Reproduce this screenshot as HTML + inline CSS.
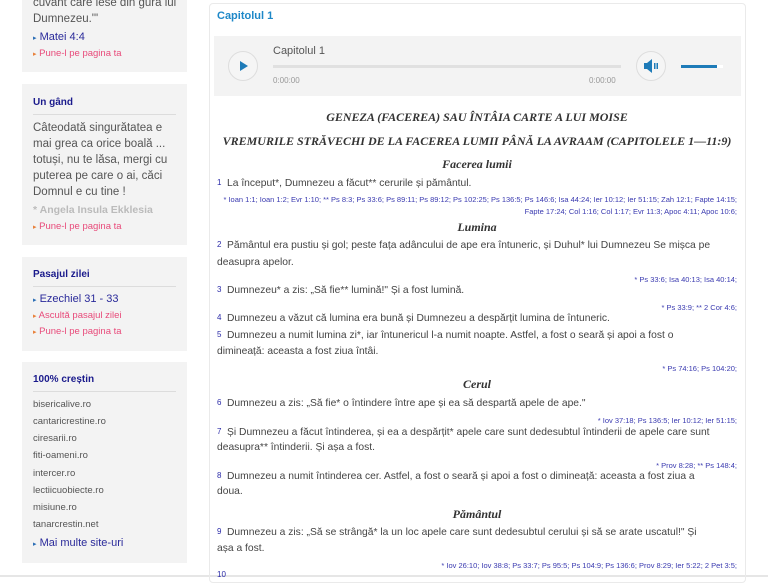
<!DOCTYPE html>
<html><head><meta charset="utf-8"><style>
*{margin:0;padding:0;box-sizing:border-box}
body{width:768px;height:577px;overflow:hidden;background:#fff;font-family:"Liberation Sans",sans-serif;position:relative}
.p{position:absolute;left:22px;width:165px;background:#f3f3f3}
.a{position:absolute;white-space:nowrap}
.h{font-size:10px;font-weight:bold;color:#1a1a8c}
.hr{position:absolute;left:11px;width:143px;height:1px;background:#dcdcdc}
.t{font-size:11.5px;color:#555;line-height:16px}
.lk{font-size:11px;color:#2a2a9a}
.pk{font-size:9.5px;color:#e84a7a}
.s{font-size:9.5px;color:#555}
.b{color:#2a6db5;font-size:7px}
.bo{color:#e8803a;font-size:7px}
.v{position:absolute;left:227px;font-size:10.3px;color:#444;white-space:nowrap}
.n{position:absolute;left:217px;font-size:8px;color:#2a2aa8;white-space:nowrap}
.r{position:absolute;right:31px;font-size:7.5px;color:#3a3ab0;white-space:nowrap}
.st{position:absolute;left:209px;width:536px;text-align:center;font-family:"Liberation Serif",serif;font-style:italic;font-weight:bold;color:#333;font-size:12px;white-space:nowrap}
</style></head><body>
<div class="p" style="top:-10px;height:82px">
 <div class="a t" style="left:11px;top:5px">cuvânt care iese din gura lui<br>Dumnezeu.'"</div>
 <div class="a lk" style="left:11px;top:41px"><span class="b">▸</span> Matei 4:4</div>
 <div class="a pk" style="left:11px;top:58px"><span class="bo">▸</span> Pune-l pe pagina ta</div>
</div>
<div class="p" style="top:84px;height:161px">
 <div class="a h" style="left:11px;top:13px">Un gând</div>
 <div class="hr" style="top:30px"></div>
 <div class="a t" style="left:11px;top:36px">Câteodată singurătatea e<br>mai grea ca orice boală ...<br>totuși, nu te lăsa, mergi cu<br>puterea pe care o ai, căci<br>Domnul e cu tine !</div>
 <div class="a" style="left:11px;top:120px;font-size:10.5px;font-weight:bold;color:#bbb">* Angela Insula Ekklesia</div>
 <div class="a pk" style="left:11px;top:137px"><span class="bo">▸</span> Pune-l pe pagina ta</div>
</div>
<div class="p" style="top:257px;height:94px">
 <div class="a h" style="left:11px;top:12px">Pasajul zilei</div>
 <div class="hr" style="top:29px"></div>
 <div class="a lk" style="left:11px;top:36px"><span class="b">▸</span> Ezechiel 31 - 33</div>
 <div class="a pk" style="left:11px;top:53px"><span class="bo">▸</span> Ascultă pasajul zilei</div>
 <div class="a pk" style="left:11px;top:69px"><span class="bo">▸</span> Pune-l pe pagina ta</div>
</div>
<div class="p" style="top:362px;height:201px">
 <div class="a h" style="left:11px;top:12px">100% creștin</div>
 <div class="hr" style="top:29px"></div>
 <div class="a s" style="left:11px;top:37px">bisericalive.ro</div>
 <div class="a s" style="left:11px;top:54px">cantaricrestine.ro</div>
 <div class="a s" style="left:11px;top:71px">ciresarii.ro</div>
 <div class="a s" style="left:11px;top:88px">fiti-oameni.ro</div>
 <div class="a s" style="left:11px;top:106px">intercer.ro</div>
 <div class="a s" style="left:11px;top:123px">lectiicuobiecte.ro</div>
 <div class="a s" style="left:11px;top:140px">misiune.ro</div>
 <div class="a s" style="left:11px;top:157px">tanarcrestin.net</div>
 <div class="a lk" style="left:11px;top:175px"><span class="b">▸</span> Mai multe site-uri</div>
</div>
<div style="position:absolute;left:0;top:575px;width:768px;height:2px;background:#e6e6e6"></div>

<div style="position:absolute;left:209px;top:3px;width:537px;height:580px;border:1px solid #eaeaea;border-radius:4px"></div>
<div class="a" style="left:217px;top:10px;font-size:11px;font-weight:bold;color:#1e88c8">Capitolul 1</div>
<div style="position:absolute;left:214px;top:36px;width:527px;height:60px;background:#f3f3f3"></div>
<div style="position:absolute;left:228px;top:51px;width:30px;height:30px;border-radius:50%;border:1px solid #ddd;background:#f5f5f5"></div>
<svg style="position:absolute;left:238px;top:60px" width="12" height="12"><path d="M2 1 L10 6 L2 11Z" fill="#1e7bb8"/></svg>
<div class="a" style="left:273px;top:45px;font-size:11px;color:#555">Capitolul 1</div>
<div style="position:absolute;left:273px;top:65px;width:348px;height:3px;background:#e0e0e0"></div>
<div class="a" style="left:273px;top:76px;font-size:8px;color:#999">0:00:00</div>
<div class="a" style="left:589px;top:76px;font-size:8px;color:#999">0:00:00</div>
<div style="position:absolute;left:636px;top:51px;width:30px;height:30px;border-radius:50%;border:1px solid #ddd;background:#f5f5f5"></div>
<svg style="position:absolute;left:643px;top:59px" width="16" height="14"><path d="M1 4 H4 L9 0 V14 L4 10 H1Z" fill="#1e7bb8"/><rect x="11" y="4" width="1.5" height="6" fill="#1e7bb8"/><rect x="13.5" y="4" width="1.5" height="6" fill="#1e7bb8"/></svg>
<div style="position:absolute;left:681px;top:65px;width:36px;height:3px;background:#1e7bb8"></div>
<div style="position:absolute;left:717px;top:65px;width:6px;height:3px;background:#fff"></div>

<div class="st" style="top:110px">GENEZA (FACEREA) SAU ÎNTÂIA CARTE A LUI MOISE</div>
<div class="st" style="top:134px">VREMURILE STRĂVECHI DE LA FACEREA LUMII PÂNĂ LA AVRAAM (CAPITOLELE 1—11:9)</div>
<div class="st" style="top:157px">Facerea lumii</div>
<div class="n" style="top:178px">1</div><div class="v" style="top:178px">La început*, Dumnezeu a făcut** cerurile și pământul.</div>
<div class="r" style="top:195px">* Ioan 1:1; Ioan 1:2; Evr 1:10; ** Ps 8:3; Ps 33:6; Ps 89:11; Ps 89:12; Ps 102:25; Ps 136:5; Ps 146:6; Isa 44:24; Ier 10:12; Ier 51:15; Zah 12:1; Fapte 14:15;</div>
<div class="r" style="top:207px">Fapte 17:24; Col 1:16; Col 1:17; Evr 11:3; Apoc 4:11; Apoc 10:6;</div>
<div class="st" style="top:220px">Lumina</div>
<div class="n" style="top:240px">2</div><div class="v" style="top:240px">Pământul era pustiu și gol; peste fața adâncului de ape era întuneric, și Duhul* lui Dumnezeu Se mișca pe</div>
<div class="v" style="left:217px;top:257px">deasupra apelor.</div>
<div class="r" style="top:275px">* Ps 33:6; Isa 40:13; Isa 40:14;</div>
<div class="n" style="top:285px">3</div><div class="v" style="top:285px">Dumnezeu* a zis: „Să fie** lumină!" Și a fost lumină.</div>
<div class="r" style="top:303px">* Ps 33:9; ** 2 Cor 4:6;</div>
<div class="n" style="top:313px">4</div><div class="v" style="top:313px">Dumnezeu a văzut că lumina era bună și Dumnezeu a despărțit lumina de întuneric.</div>
<div class="n" style="top:330px">5</div><div class="v" style="top:330px">Dumnezeu a numit lumina zi*, iar întunericul l-a numit noapte. Astfel, a fost o seară și apoi a fost o</div>
<div class="v" style="left:217px;top:346px">dimineață: aceasta a fost ziua întâi.</div>
<div class="r" style="top:364px">* Ps 74:16; Ps 104:20;</div>
<div class="st" style="top:377px">Cerul</div>
<div class="n" style="top:398px">6</div><div class="v" style="top:398px">Dumnezeu a zis: „Să fie* o întindere între ape și ea să despartă apele de ape."</div>
<div class="r" style="top:416px">* Iov 37:18; Ps 136:5; Ier 10:12; Ier 51:15;</div>
<div class="n" style="top:427px">7</div><div class="v" style="top:427px">Și Dumnezeu a făcut întinderea, și ea a despărțit* apele care sunt dedesubtul întinderii de apele care sunt</div>
<div class="v" style="left:217px;top:442px">deasupra** întinderii. Și așa a fost.</div>
<div class="r" style="top:461px">* Prov 8:28; ** Ps 148:4;</div>
<div class="n" style="top:471px">8</div><div class="v" style="top:471px">Dumnezeu a numit întinderea cer. Astfel, a fost o seară și apoi a fost o dimineață: aceasta a fost ziua a</div>
<div class="v" style="left:217px;top:486px">doua.</div>
<div class="st" style="top:507px">Pământul</div>
<div class="n" style="top:527px">9</div><div class="v" style="top:527px">Dumnezeu a zis: „Să se strângă* la un loc apele care sunt dedesubtul cerului și să se arate uscatul!" Și</div>
<div class="v" style="left:217px;top:543px">așa a fost.</div>
<div class="r" style="top:561px">* Iov 26:10; Iov 38:8; Ps 33:7; Ps 95:5; Ps 104:9; Ps 136:6; Prov 8:29; Ier 5:22; 2 Pet 3:5;</div>
<div class="n" style="top:570px">10</div>
</body></html>
